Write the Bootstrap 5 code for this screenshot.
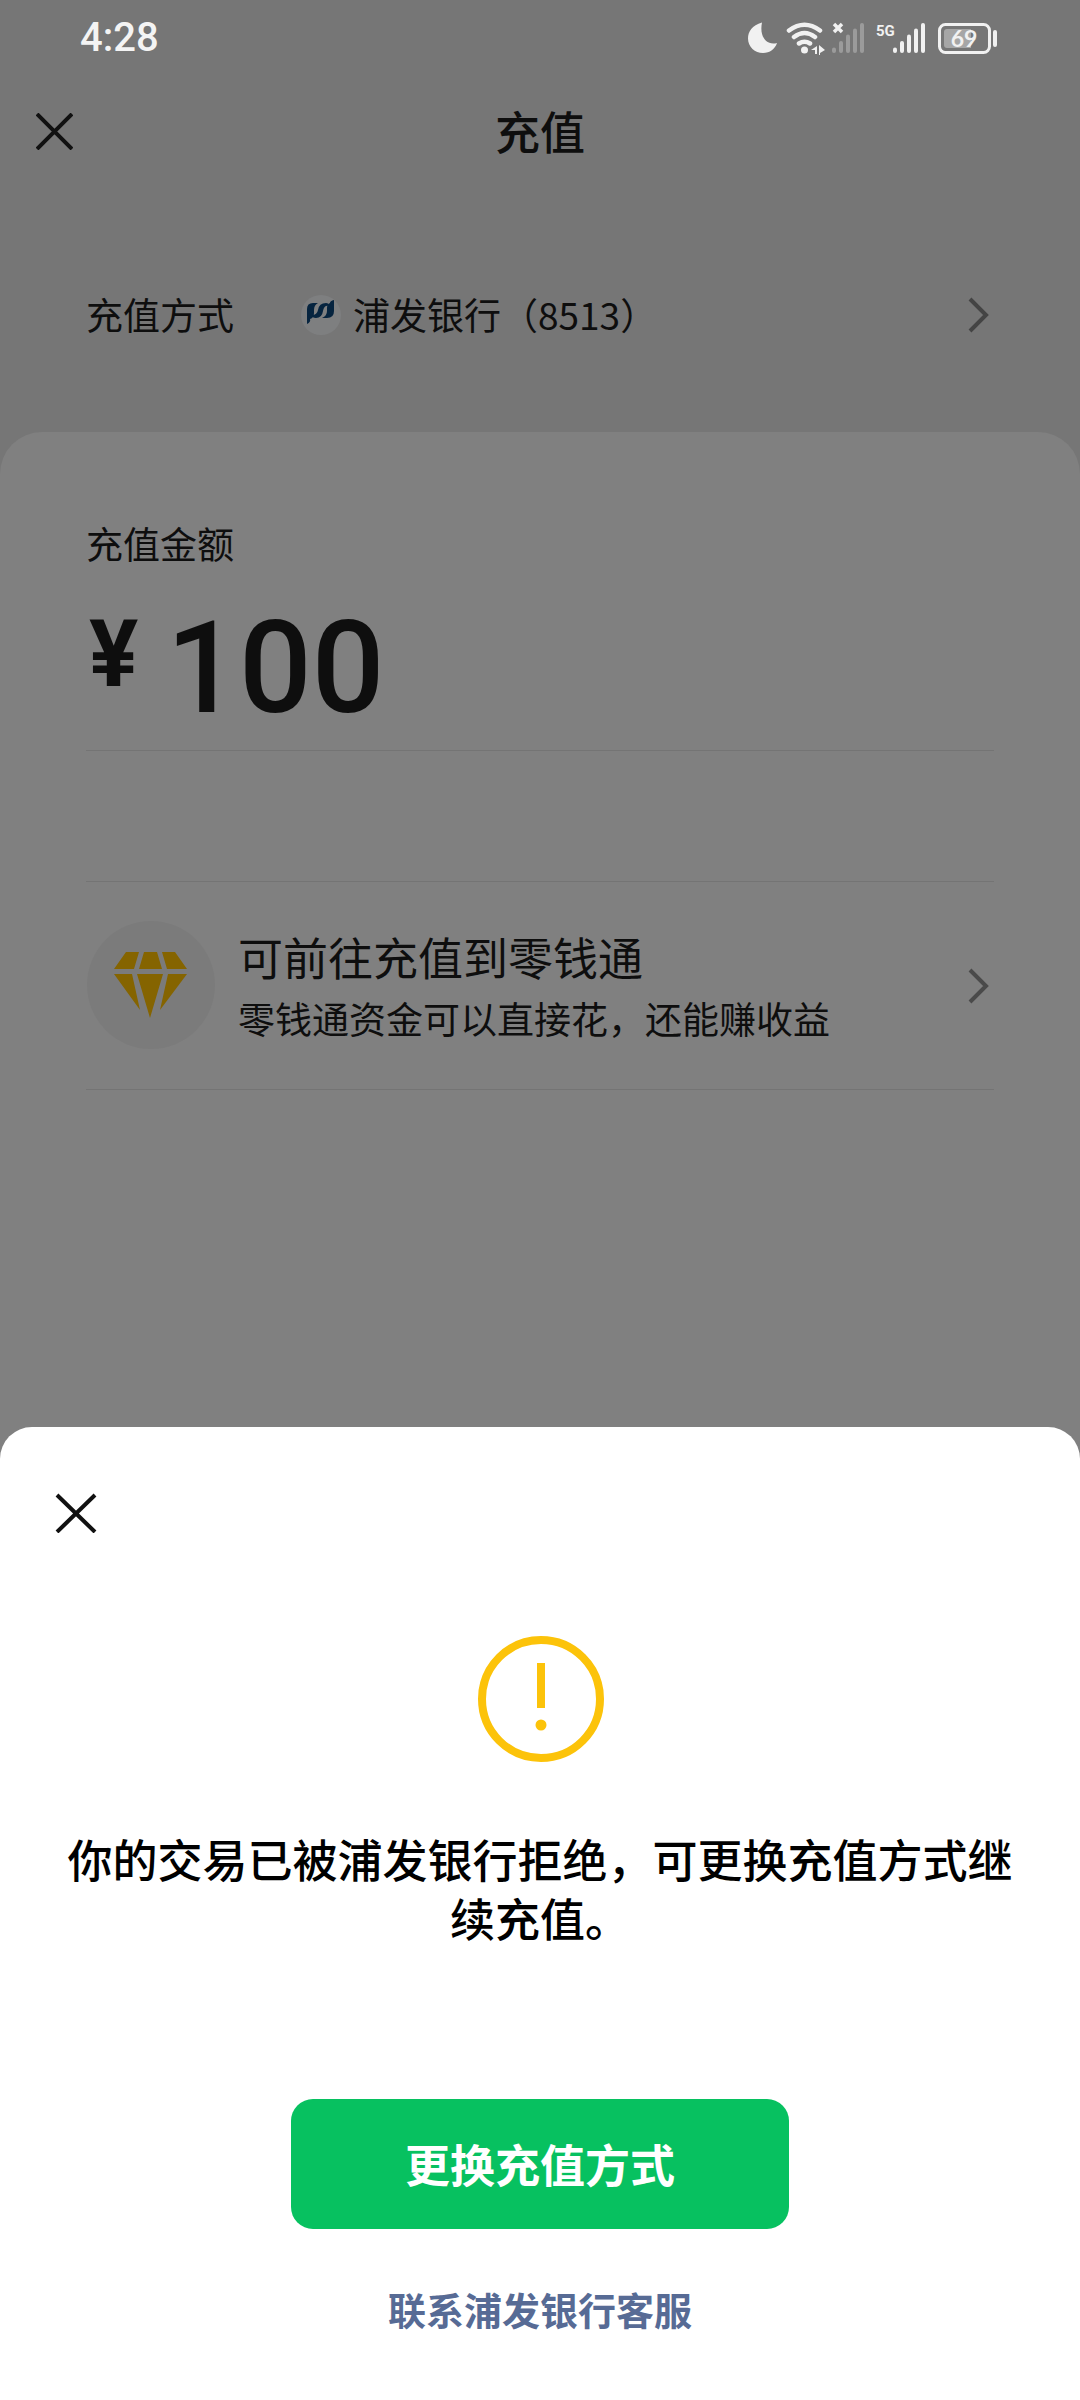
<!DOCTYPE html>
<html lang="zh-CN">
<head>
<meta charset="utf-8">
<meta name="viewport" content="width=device-width, initial-scale=1">
<title>充值</title>
<link href="https://cdn.jsdelivr.net/npm/bootstrap@5.3.0/dist/css/bootstrap.min.css" rel="stylesheet">
<style>
  body { background: #767676; color: #0e0e0e; font-family: "Noto Sans CJK SC", sans-serif; font-size: 37px; }
  svg { display: block; flex: none; }
  .status-bar { height: 76px; padding: 0 80px; color: #f4f4f4; }
  .clock { font-family: Roboto, sans-serif; font-size: 40px; line-height: 40px; font-weight: 500; }
  .title-bar { height: 110px; padding: 0 36px; display: grid; grid-template-columns: 1fr auto 1fr; }
  .page-title { font-size: 45px; line-height: 60px; font-weight: 500; }
  .icon-btn { padding: 0; border: 0; background: none; justify-self: start; color: #111; }
  .pay-row { height: 102px; margin: 78px 0 66px; padding: 0 90px 0 86px; gap: 66px; color: inherit; }
  .bank-name { gap: 11px; }
  .panel { background: #808080; border-radius: 42px 42px 0 0; padding: 84px 86px 0; flex: 1; }
  .amount-label { line-height: 54px; }
  .amount-row { padding: 33px 0 17px; gap: 28px; border-bottom: 1px solid #747474; font-family: Roboto, sans-serif; }
  .yen { font-size: 92px; line-height: 104px; font-weight: 700; padding-left: 3px; }
  .amount-input { font-size: 128px; line-height: 130px; height: 130px; font-weight: 500; padding: 0; border: 0; background: none; color: inherit; min-width: 0; outline: 0; }
  .promo { margin-top: 130px; height: 209px; padding-right: 4px; gap: 22px; border: solid #747474; border-width: 1px 0; color: inherit; }
  .promo-title { font-size: 45px; line-height: 64px; }
  .promo-sub { line-height: 58px; }
  .sheet { background: #fff; border-radius: 32px 32px 0 0; padding: 66px 55px 61px; }
  .warn-icon { margin-top: 102px; }
  .notice { font-size: 45px; line-height: 59px; font-weight: 500; color: #000; margin: 66px 0 152px; }
  .btn-change { --bs-btn-bg: #07c160; --bs-btn-color: #fff; --bs-btn-hover-bg: #06ad56; --bs-btn-hover-color: #fff; height: 130px; padding: 0 114px; font-size: 45px; font-weight: 700; border: 0; border-radius: 22px; }
  .service-link { font-size: 38px; line-height: 56px; font-weight: 700; color: #576b95; margin-top: 52px; margin-bottom: 2px; }
</style>
</head>
<body>
<main class="d-flex flex-column min-vh-100">
  <div class="status-bar d-flex align-items-center justify-content-between">
    <span class="clock">4:28</span>
    <svg width="252" height="36" viewBox="0 0 252 36" fill="#f1f1f1" role="img" aria-label="状态">
      <path d="M14 2.500C4 5 0 12 0 18.500C0 27 7 33 15 33C22 33 27 29 29 23C19 26 11 17 14 2.500Z"/>
      <g fill="none" stroke="#f1f1f1" stroke-width="4.500" stroke-linecap="round"><path d="M41 10.500Q56.500-1 72 10.500M46 17Q56.500 9 67 17M51 23.500Q56.500 20 62 23.500"/></g>
      <circle cx="56.500" cy="30" r="3.500"/>
      <path d="M69 26v8h-2v-4h-4zM71 25l6 5-5 3v2h-1z"/>
      <path d="M86 4l8 8M94 4l-8 8" stroke="#f1f1f1" stroke-width="3.500"/>
      <g fill="#9b9b9b"><rect x="84" y="27.500" width="4" height="5.500" rx="2"/><rect x="91" y="21" width="4" height="12" rx="2"/><rect x="98" y="14.500" width="4" height="18.500" rx="2"/><rect x="105" y="8.500" width="4" height="24.500" rx="2"/><rect x="112" y="3" width="4" height="30" rx="2"/></g>
      <text x="128" y="16" font-family="Roboto" font-size="15" font-weight="700">5G</text>
      <rect x="145" y="27.500" width="4" height="5.500" rx="2"/><rect x="152" y="21" width="4" height="12" rx="2"/><rect x="159" y="14.500" width="4" height="18.500" rx="2"/><rect x="166" y="8.500" width="4" height="24.500" rx="2"/><rect x="173" y="3" width="4" height="30" rx="2"/>
      <rect x="191.500" y="4.500" width="50" height="28" rx="6" fill="none" stroke="#f1f1f1" stroke-width="3"/>
      <path d="M196 12a3 3 0 0 1 3-3h24v19h-24a3 3 0 0 1-3-3z" fill="#a6a6a6"/>
      <text x="216" y="27" font-family="Lato" font-size="23" font-weight="700" text-anchor="middle">69</text>
      <rect x="245" y="10" width="4" height="17" rx="2"/>
    </svg>
  </div>
  <header class="title-bar align-items-center">
    <button class="icon-btn" type="button" aria-label="关闭"><svg width="37" height="37" viewBox="0 0 37 37" fill="none" stroke="currentColor" stroke-width="4"><path d="M1 1l35 35M36 1L1 36"/></svg></button>
    <h1 class="page-title m-0">充值</h1>
  </header>
  <a href="#" class="pay-row d-flex align-items-center text-decoration-none">
    <span>充值方式</span>
    <span class="bank-name d-flex align-items-center flex-grow-1">
      <svg width="42" height="42" viewBox="0 0 42 42"><circle cx="21" cy="21" r="20" fill="#7e7f80"/><g fill="#06243f"><path d="M7 30V15Q7 9 13 9H18Q14 11 14 16V19Q14 24 10 25Q11 28 7 30Z"/><path d="M12 21Q17 21 18 16Q19 9 26 9Q29 9 29 12Q24 11 23 17Q22 24 16 24Q12 24 12 21Z"/><path d="M34 6V17Q34 24 27 24H22Q27 22 27 17V14Q27 10 30 9Q30 7 34 6Z"/></g></svg>
      <span>浦发银行（8513）</span>
    </span>
    <svg width="22" height="36" viewBox="0 0 22 36" fill="none" stroke="#444" stroke-width="4"><path d="M2 2l16 16L2 34"/></svg>
  </a>
  <section class="panel">
    <label class="amount-label d-block" for="amount">充值金额</label>
    <div class="amount-row d-flex align-items-start">
      <span class="yen">¥</span>
      <input class="amount-input flex-grow-1" id="amount" type="text" inputmode="decimal" value="100">
    </div>
    <a href="#" class="promo d-flex align-items-center text-decoration-none">
      <svg width="130" height="130" viewBox="0 0 130 130"><circle cx="65" cy="64" r="64" fill="#7b7b7b"/><g fill="#856400"><path d="M40 31H53L48 48H28ZM58 31H71L76 48H53ZM76 31H89L101 48H81ZM28 53H46L54 89ZM51 53H77L64 97ZM82 53H101L74 89Z"/></g></svg>
      <span class="flex-grow-1">
        <span class="promo-title d-block">可前往充值到零钱通</span>
        <span class="promo-sub d-block">零钱通资金可以直接花，还能赚收益</span>
      </span>
      <svg width="22" height="36" viewBox="0 0 22 36" fill="none" stroke="#4a4a4a" stroke-width="4"><path d="M2 2l16 16L2 34"/></svg>
    </a>
  </section>
</main>
<section class="sheet fixed-bottom d-flex flex-column align-items-center" role="dialog" aria-labelledby="notice">
  <button class="icon-btn align-self-start" type="button" aria-label="关闭"><svg width="42" height="40" viewBox="0 0 42 40" fill="none" stroke="currentColor" stroke-width="4"><path d="M2 2l38 37M40 2L2 39"/></svg></button>
  <svg class="warn-icon" width="128" height="128" viewBox="0 0 128 128"><circle cx="65" cy="64" r="59" fill="none" stroke="#fcc30a" stroke-width="8"/><path d="M61 28h8v45h-8z" fill="#fcc30a"/><circle cx="65" cy="90" r="5.500" fill="#fcc30a"/></svg>
  <p class="notice text-center" id="notice">你的交易已被浦发银行拒绝，可更换充值方式继续充值。</p>
  <button class="btn btn-change" type="button">更换充值方式</button>
  <a href="#" class="service-link text-decoration-none">联系浦发银行客服</a>
</section>
<script src="https://cdn.jsdelivr.net/npm/bootstrap@5.3.0/dist/js/bootstrap.bundle.min.js"></script>
</body>
</html>
